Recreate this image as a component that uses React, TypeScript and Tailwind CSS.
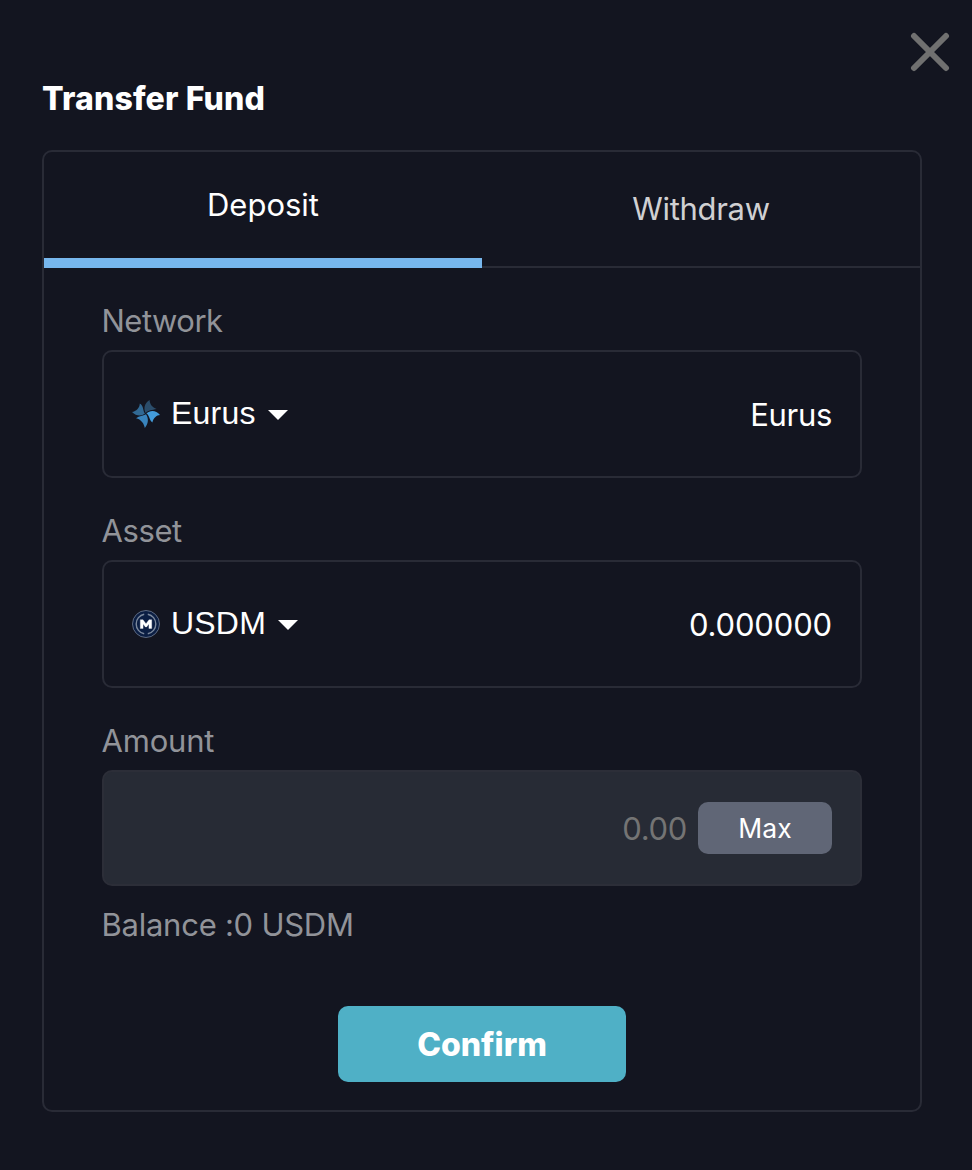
import React from "react";

function EurusLogo() {
  return (
    <svg width="28" height="28" viewBox="0 0 28 28" aria-hidden="true">
      <path d="M13.6 13C11.4 8.4 12.4 3 17.6 0C17.6 3.8 20.4 7.6 24.6 9C20 10 16.6 10 13.6 13Z" fill="#2b4d6b" />
      <path d="M14.4 13.6C17.8 10 24 9.8 28 15C24.6 15.2 21.2 18 20.4 22.6C17.2 20.4 17.8 15.6 14.4 13.6Z" fill="#439cdb" />
      <path d="M14 14.2C16.8 18.2 16.6 23.6 12.8 28C12.2 23.8 9 19.2 4 18.2C7.4 15.6 10.8 16.2 14 14.2Z" fill="#3984bd" />
      <path d="M13 13.6C9.6 16.4 4.2 16.4 0 12C4.2 11.2 7.6 8 7.8 3.4C12 6 10.6 10.6 13 13.6Z" fill="#316994" />
    </svg>
  );
}

function UsdmLogo() {
  return (
    <svg width="28" height="28" viewBox="0 0 28 28" fill="none" aria-hidden="true">
      <circle cx="14" cy="14" r="13.5" fill="#0b1e43" stroke="#66738a" strokeWidth="0.9" />
      <path d="M12.2 4.2A10 10 0 0 0 12.2 23.8M15.8 4.2A10 10 0 0 1 15.8 23.8" stroke="#7c899d" strokeWidth="1.4" />
      <path d="M8.3 18.5V9.7H11L14 13.8L17 9.7H19.7V18.5H16.9V14L14.6 17H13.4L11.1 14V18.5Z" fill="#fff" stroke="#fff" strokeWidth="0.3" />
    </svg>
  );
}

function Caret() {
  return (
    <svg className="mt-0.5" width="20" height="10" viewBox="0 0 20 10" aria-hidden="true">
      <path d="M0 0H20L10 10Z" fill="#fff" />
    </svg>
  );
}

type SelectProps = {
  label: string;
  name: string;
  value: string;
  logo: React.ReactNode;
  labelClass: string;
  valueClass: string;
};

function SelectField({ label, name, value, logo, labelClass, valueClass }: SelectProps) {
  return (
    <div className="mb-8">
      <div className={`h-[50px] text-[31px] leading-[42px] text-[#919399] ${labelClass}`}>{label}</div>
      <div className="flex h-32 items-center justify-between rounded-[10px] border-2 border-[#292b36] px-7 text-white">
        <button className="flex items-center">
          {logo}
          <span className="mr-3 ml-[11px] pb-0.5 font-['Liberation_Sans',sans-serif] text-[32px] leading-10 tracking-[0.2px]">{name}</span>
          <Caret />
        </button>
        <span className={`pt-px text-[31px] leading-10 ${valueClass}`}>{value}</span>
      </div>
    </div>
  );
}

export default function App() {
  return (
    <main className="h-[1170px] w-[972px] overflow-hidden bg-[#131520] pr-[50px] pl-[42px] font-['Inter',sans-serif]">
      <header className="flex h-[150px] justify-between">
        <h1 className="pt-[78px] text-[32px] leading-[42px] font-extrabold tracking-[0.15px] text-white">Transfer Fund</h1>
        <button className="-mr-[28px] h-10 pt-8" aria-label="Close">
          <svg width="40" height="40" viewBox="0 0 40 40" aria-hidden="true">
            <path d="M4 4L36 36M36 4L4 36" stroke="#707070" strokeWidth="6" strokeLinecap="round" />
          </svg>
        </button>
      </header>
      <section className="h-[962px] rounded-[10px] border-2 border-[#292b36]">
        <nav className="grid h-[116px] grid-cols-2 text-[31px] leading-[42px]">
          <button className="border-b-[10px] border-[#77b7ed] text-white">Deposit</button>
          <button className="border-b-2 border-[#292b36] tracking-[-0.3px] text-[#d0d0d2]">Withdraw</button>
        </nav>
        <div className="px-[58px] pt-8">
          <SelectField label="Network" name="Eurus" value="Eurus" logo={<EurusLogo />} labelClass="-ml-[0.5px] tracking-[-0.5px]" valueClass="tracking-[-0.3px]" />
          <SelectField label="Asset" name="USDM" value="0.000000" logo={<UsdmLogo />} labelClass="-ml-[0.5px] tracking-[-0.4px]" valueClass="tracking-[-0.15px]" />
          <div className="-ml-[0.5px] h-[50px] text-[31px] leading-[42px] tracking-[-0.2px] text-[#919399]">Amount</div>
          <div className="flex h-[116px] items-center justify-end rounded-[10px] border-2 border-[#2c2e38] bg-[#272b35] pr-7">
            <span className="mr-[11px] pt-0.5 text-[31px] leading-10 tracking-[-0.3px] text-[#747474]">0.00</span>
            <button className="h-[52px] w-[134px] rounded-[10px] bg-[#606676] text-[26.5px] leading-10 text-white">Max</button>
          </div>
          <div className="mt-[18px] -ml-[0.5px] text-[31px] leading-[42px] tracking-[-0.25px] text-[#919399]">Balance :0 USDM</div>
          <button className="mx-auto mt-[60px] block h-[76px] w-72 rounded-[10px] bg-[#4fb0c6] pt-0.5 text-[32px] font-extrabold text-white">Confirm</button>
        </div>
      </section>
    </main>
  );
}
